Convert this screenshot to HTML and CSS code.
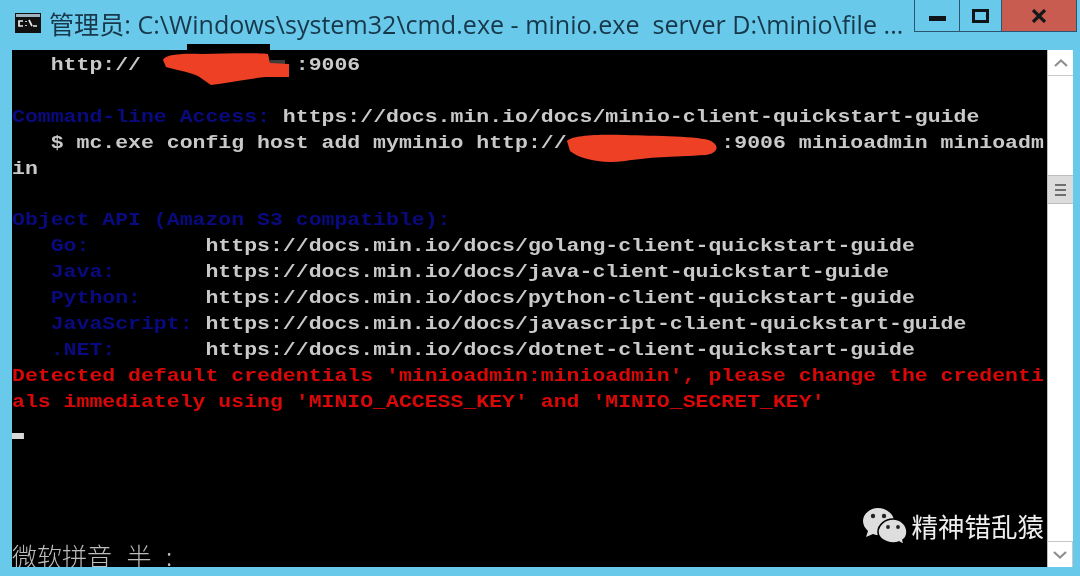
FILE: index.html
```html
<!DOCTYPE html>
<html lang="zh">
<head>
<meta charset="utf-8">
<title>cmd</title>
<link rel="stylesheet" href="styles.css">
</head>
<body>
<div class="window">
  <header class="titlebar">
    <svg class="app-icon" viewBox="0 0 26 20" width="26" height="20">
      <rect x="0" y="0" width="26" height="20" fill="#111"/>
      <rect x="1" y="1" width="24" height="3" fill="#9fb4c0"/>
      <path d="M8 8H4V13H8M11 8V9M11 12V13M14 7L17 13M18 13H22" stroke="#e8e8e8" stroke-width="1.7" fill="none"/>
    </svg>
    <div class="title">管理员: C:\Windows\system32\cmd.exe - minio.exe&nbsp; server D:\minio\file ...</div>
    <div class="controls">
      <div class="ctl ctl-min"><i class="min-glyph"></i></div>
      <div class="ctl ctl-max"><i class="max-glyph"></i></div>
      <div class="ctl ctl-close">
        <svg viewBox="0 0 16 14" width="16" height="14"><path d="M2 1L14 13M14 1L2 13" stroke="#15181a" stroke-width="3.2"/></svg>
      </div>
    </div>
  </header>
  <div class="body">
    <main class="console">
      <div class="row">   http://            :9006</div>
      <div class="row"> </div>
      <div class="row"><span class="blue">Command-line Access:</span> https://docs.min.io/docs/minio-client-quickstart-guide</div>
      <div class="row">   $ mc.exe config host add myminio http://            :9006 minioadmin minioadm</div>
      <div class="row">in</div>
      <div class="row"> </div>
      <div class="row"><span class="blue">Object API (Amazon S3 compatible):</span></div>
      <div class="row"><span class="blue">   Go:</span>         https://docs.min.io/docs/golang-client-quickstart-guide</div>
      <div class="row"><span class="blue">   Java:</span>       https://docs.min.io/docs/java-client-quickstart-guide</div>
      <div class="row"><span class="blue">   Python:</span>     https://docs.min.io/docs/python-client-quickstart-guide</div>
      <div class="row"><span class="blue">   JavaScript:</span> https://docs.min.io/docs/javascript-client-quickstart-guide</div>
      <div class="row"><span class="blue">   .NET:</span>       https://docs.min.io/docs/dotnet-client-quickstart-guide</div>
      <div class="row red">Detected default credentials 'minioadmin:minioadmin', please change the credenti</div>
      <div class="row red">als immediately using 'MINIO_ACCESS_KEY' and 'MINIO_SECRET_KEY'</div>
      <div class="row cursor-row"><i class="cursor"></i></div>
      <div class="ime">微软拼音 半 :</div>

      <div class="watermark">
        <svg viewBox="0 0 44 38" width="44" height="38">
          <path d="M15 1C7 1 0 7 0 14C0 18 2 21 5 24L3 30L10 27C12 28 14 28 17 28C26 28 31 21 31 14C31 7 23 1 15 1Z" fill="#dedede"/>
          <path d="M30 12C22 12 15 18 15 25C15 31 22 36 30 36C32 36 34 36 36 35L41 38L40 33C43 31 44 28 44 25C44 18 38 12 30 12Z" fill="#dedede" stroke="#000" stroke-width="1.6"/>
          <circle cx="10" cy="9" r="2.2" fill="#222"/><circle cx="21" cy="9" r="2.2" fill="#222"/>
          <circle cx="25" cy="20" r="1.9" fill="#222"/><circle cx="35" cy="20" r="1.9" fill="#222"/>
        </svg>
        <span>精神错乱猿</span>
      </div>
    </main>
    <aside class="scrollbar">
      <div class="sb-btn">
        <svg viewBox="0 0 14 8" width="14" height="8"><path d="M1 7L7 1.5L13 7" stroke="#8f8f8f" stroke-width="2.2" fill="none"/></svg>
      </div>
      <div class="sb-track">
        <div class="sb-thumb"><i></i><i></i><i></i></div>
      </div>
      <div class="sb-btn sb-btn-end">
        <svg viewBox="0 0 14 8" width="14" height="8"><path d="M1 1L7 6.5L13 1" stroke="#8f8f8f" stroke-width="2.2" fill="none"/></svg>
      </div>
    </aside>
  </div>
  <svg class="redact" viewBox="0 0 1080 170" width="1080" height="170">
    <path d="M187 44H270V53H187Z" fill="#000"/>
    <path d="M270 60H285V64H270Z" fill="#3c3c3c"/>
    <path d="M163 60C165 55 178 53 202 54C232 53 262 53 268 54L270 63L289 64V77H265C250 79 232 82 211 85L198 76C186 71 172 69 166 67Z" fill="#ee4024"/>
    <path d="M567 141C572 135 600 134 625 135C655 136 700 136 711 141C720 146 718 153 706 155C670 157 650 157 625 161C600 164 580 159 570 151Z" fill="#ee4024"/>
  </svg>
</div>
</body>
</html>
```

FILE: styles.css
```css
* { box-sizing: border-box; }
html, body { margin: 0; height: 100%; overflow: hidden; background: #69c9ea; }
.window { position: relative; width: 1080px; height: 576px; display: flex; flex-direction: column; background: #69c9ea; filter: blur(0.6px); }

.titlebar { height: 50px; display: flex; align-items: flex-start; padding-left: 15px; }
.app-icon { margin-top: 13px; flex: none; }
.title { margin: 5px 0 0 8px; width: 865px; font: 25.1px/38px "Open Sans", "Noto Sans CJK SC", sans-serif; color: #17384a; white-space: nowrap; }
.controls { display: flex; height: 32px; flex: none; border: 1px solid #2c5670; border-top: 0; }
.ctl { display: flex; align-items: center; justify-content: center; }
.ctl-min { width: 45px; border-right: 1px solid #2c5670; }
.ctl-max { width: 42px; border-right: 1px solid #2c5670; }
.ctl-close { width: 74px; background: #c85c50; }
.min-glyph { display: block; width: 17px; height: 5px; margin-top: 6px; background: #0f1418; }
.max-glyph { display: block; width: 17px; height: 14px; border: 3px solid #0f1418; }

.body { flex: none; height: 517px; display: flex; padding-left: 12px; }
.console { position: relative; width: 1035px; height: 517px; background: #000; padding-top: 2px; overflow: hidden; }
.row { height: 25.9px; white-space: pre; font: bold 18px/26px "Liberation Mono", monospace; color: #c9c9c9; transform: scaleX(1.194); transform-origin: left center; }
.blue { color: #0a0a80; }
.red { color: #d80808; }
.cursor-row { position: relative; }
.cursor { position: absolute; left: 0; top: 19px; width: 10px; height: 6px; background: #d8d8d8; }
.ime { position: absolute; left: 0; bottom: 0; font: 300 25px/24px "Noto Sans CJK SC", sans-serif; word-spacing: 9px; color: #bdbdbd; white-space: pre; }

.redact { position: absolute; left: 0; top: 0; }
.watermark { position: absolute; right: 3px; bottom: 22px; display: flex; align-items: center; gap: 5px; color: #eeeeee; }
.watermark span { font: 400 26.5px/38px "Noto Sans CJK SC", sans-serif; }

.scrollbar { width: 26px; height: 517px; display: flex; flex-direction: column; background: #fff; border-left: 1px solid #bdbdbd; }
.sb-btn { height: 26px; flex: none; display: flex; align-items: center; justify-content: center; border-bottom: 1px solid #c8c8c8; }
.sb-btn-end { border-bottom: 0; border-top: 1px solid #c8c8c8; border-right: 1px solid #c8c8c8; }
.sb-track { flex: 1; padding-top: 99px; }
.sb-thumb { height: 29px; background: #dcdcdc; border-top: 1px solid #bdbdbd; border-bottom: 1px solid #bdbdbd; display: flex; flex-direction: column; align-items: center; justify-content: center; gap: 3px; }
.sb-thumb i { display: block; width: 11px; height: 2px; background: #6f6f6f; }
```
